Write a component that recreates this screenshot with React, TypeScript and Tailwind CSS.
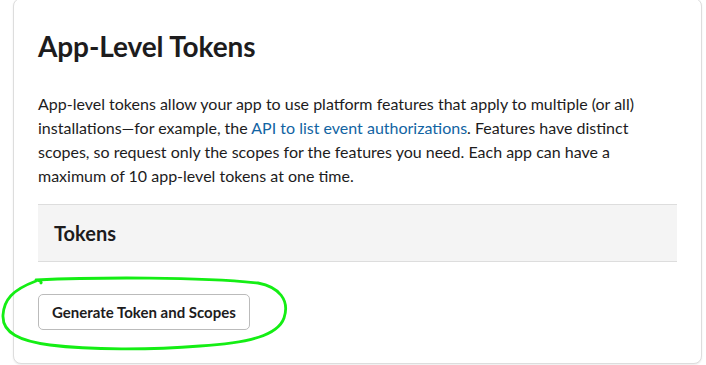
import React from "react";

export default function App() {
  return (
    <div
      className="relative w-[706px] h-[365px] overflow-hidden bg-white pl-[13px]"
      style={{ fontFamily: "Lato, 'Noto Sans', sans-serif" }}
    >
      <div className="mt-[-2px] w-[689px] rounded-lg border border-[#dddddd] bg-white px-6 pt-[30px] pb-[33px] shadow-[0_1px_2px_rgba(0,0,0,0.08)] text-[#1d1c1d]">
        <h2 className="text-[28px] font-bold leading-[34px] tracking-[-0.1px]">App-Level Tokens</h2>
        <p className="mt-[29px] text-[16px] leading-[24px]">
          App-level tokens allow your app to use platform features that apply to multiple (or all)
          installations—for example, the{" "}
          <a className="text-[#1264a3]">API to list event authorizations</a>. Features have distinct
          scopes, so request only the scopes for the features you need. Each app can have a maximum
          of 10 app-level tokens at one time.
        </p>
        <div className="mt-[16px] flex h-[58px] items-center border-y border-[#dddddd] bg-[#f4f4f4] px-4">
          <span className="text-[20px] font-bold">Tokens</span>
        </div>
        <div className="mt-[32px]">
          <button className="h-[36px] rounded-[5px] border border-[#bbbbbb] bg-white px-[13px] text-[15px] font-bold text-[#1d1c1d]">
            Generate Token and Scopes
          </button>
        </div>
      </div>
      <svg className="pointer-events-none absolute left-0 top-0" width="706" height="365">
        <path
          d="M 36 280 C 39 280, 42 282, 41 283 M 36 280 C 100 277, 200 277, 258 283 C 279 287, 290 300, 284 318 C 278 335, 250 343, 200 346 C 150 350, 90 350, 50 345 C 20 341, 2 333, 3 315 C 4 300, 12 290, 36 281"
          fill="none"
          stroke="#14ee14"
          strokeWidth="2.8"
          strokeLinecap="round"
          strokeLinejoin="round"
        />
      </svg>
    </div>
  );
}
